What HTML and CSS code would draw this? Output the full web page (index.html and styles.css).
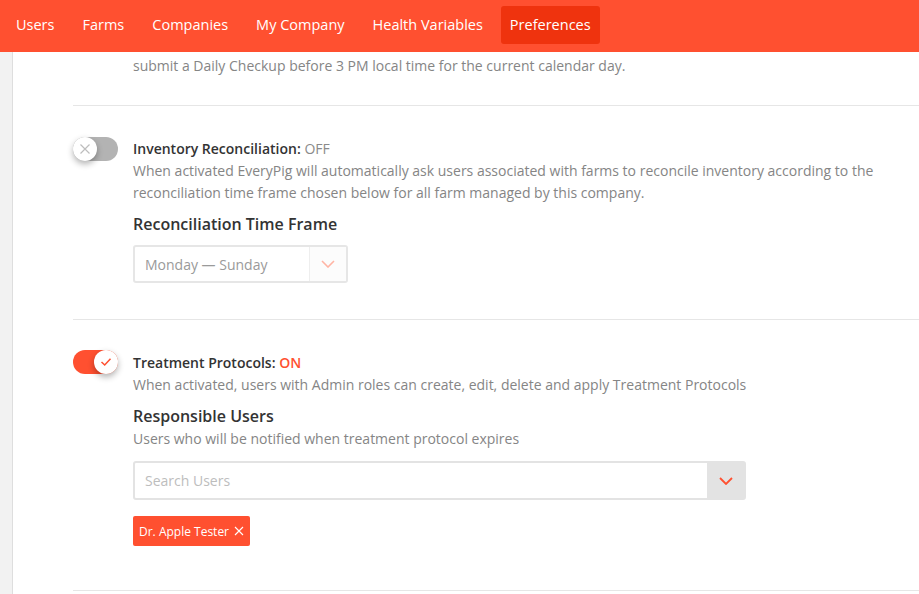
FILE: index.html
```html
<!DOCTYPE html>
<html>
<head>
<meta charset="utf-8">
<link rel="stylesheet" href="styles.css">
</head>
<body>
<header class="topbar">
  <nav class="nav">
    <a class="nav-item">Users</a>
    <a class="nav-item">Farms</a>
    <a class="nav-item">Companies</a>
    <a class="nav-item">My Company</a>
    <a class="nav-item">Health Variables</a>
    <a class="nav-item active">Preferences</a>
  </nav>
</header>
<div class="layout">
  <aside class="sidebar"></aside>
  <main class="main">
    <section class="intro">
      <p class="desc">submit a Daily Checkup before 3 PM local time for the current calendar day.</p>
    </section>

    <section class="setting">
      <div class="toggle off"><span class="knob"><svg width="12" height="12" viewBox="0 0 12 12"><path d="M1.5 1.5L10.5 10.5M10.5 1.5L1.5 10.5" stroke="#bdbdbd" stroke-width="1.2" fill="none"/></svg></span></div>
      <div class="body">
        <div class="title">Inventory Reconciliation: <span class="state-off">OFF</span></div>
        <p class="desc">When activated EveryPig will automatically ask users associated with farms to reconcile inventory according to the reconciliation time frame chosen below for all farm managed by this company.</p>
        <h3 class="subhead">Reconciliation Time Frame</h3>
        <div class="select">
          <span class="select-value">Monday — Sunday</span>
          <span class="select-arrow"><svg width="14" height="8" viewBox="0 0 14 8"><path d="M1 1L7 7L13 1" stroke="#ffb4a4" stroke-width="1.6" fill="none"/></svg></span>
        </div>
      </div>
    </section>

    <section class="setting last">
      <div class="toggle on"><span class="knob"><svg width="12" height="10" viewBox="0 0 12 10"><path d="M1.5 5L4.7 8L10.5 1.8" stroke="#ff5030" stroke-width="1.5" fill="none"/></svg></span></div>
      <div class="body">
        <div class="title">Treatment Protocols: <span class="state-on">ON</span></div>
        <p class="desc">When activated, users with Admin roles can create, edit, delete and apply Treatment Protocols</p>
        <h3 class="subhead">Responsible Users</h3>
        <p class="desc">Users who will be notified when treatment protocol expires</p>
        <div class="search">
          <span class="search-placeholder">Search Users</span>
          <span class="search-arrow"><svg width="14" height="8" viewBox="0 0 14 8"><path d="M1 1L7 7L13 1" stroke="#ff5030" stroke-width="1.8" fill="none"/></svg></span>
        </div>
        <div class="tags">
          <span class="tag">Dr. Apple Tester <svg width="10" height="10" viewBox="0 0 10 10"><path d="M1 1L9 9M9 1L1 9" stroke="#fff" stroke-width="1.1" fill="none"/></svg></span>
        </div>
      </div>
    </section>
  </main>
</div>
</body>
</html>
```

FILE: styles.css
```css
* { box-sizing: border-box; }
html, body { margin: 0; padding: 0; }
body {
  font-family: "Open Sans", "Noto Sans", sans-serif;
  background: #fff;
  color: #333;
  width: 919px;
  height: 594px;
  overflow: hidden;
}
.topbar {
  height: 52px;
  background: #ff5030;
  display: flex;
  align-items: flex-start;
  padding-top: 6px;
}
.nav {
  display: flex;
  gap: 8px;
  padding-left: 6px;
  align-items: center;
}
.nav-item {
  color: #fff;
  font-size: 14.5px;
  line-height: 38px;
  height: 38px;
  padding: 0 10px;
  border-radius: 3px;
}
.nav-item.active { background: #ef330e; padding: 0 9px; }
.layout {
  display: flex;
  height: 542px;
}
.sidebar {
  width: 13px;
  flex: none;
  background: #f2f2f2;
  border-right: 1px solid #dedede;
}
.main {
  flex: 1;
  padding-left: 60px;
}
.desc {
  margin: 0;
  font-size: 14px;
  line-height: 22px;
  color: #858585;
}
.intro {
  padding: 3px 0 28px 60px;
  border-bottom: 1px solid #e6e6e6;
}
.setting {
  display: flex;
  padding: 32px 0 36px 0;
  border-bottom: 1px solid #e6e6e6;
}
.setting.last { padding-bottom: 44px; }
.toggle {
  flex: none;
  width: 45px;
  height: 24px;
  border-radius: 12px;
  margin-top: -1px;
  margin-right: 15px;
  position: relative;
}
.toggle.off { background: #b3b3b3; }
.toggle.on { background: #ff5030; margin-top: -2px; }
.knob {
  position: absolute;
  top: 0;
  width: 24px;
  height: 24px;
  border-radius: 50%;
  background: #fff;
  box-shadow: 0 3px 6px rgba(0,0,0,0.3);
  display: flex;
  align-items: center;
  justify-content: center;
}
.toggle.off .knob { left: 0; }
.toggle.on .knob { right: 0; }
.body { flex: 1; }
.title {
  font-size: 14px;
  line-height: 22px;
  font-weight: 600;
  color: #333;
}
.state-off { color: #8a8a8a; font-weight: 400; }
.state-on { color: #ff5030; font-weight: 600; }
.subhead {
  margin: 8px 0 0 0;
  font-size: 16px;
  line-height: 24px;
  font-weight: 600;
  color: #333;
}
.select {
  margin-top: 9px;
  width: 215px;
  height: 38px;
  border: 2px solid #e6e6e6;
  border-radius: 3px;
  display: flex;
  align-items: center;
}
.select-value {
  flex: 1;
  padding-left: 10px;
  font-size: 14px;
  color: #9a9a9a;
}
.select-arrow {
  width: 37px;
  height: 100%;
  border-left: 1px solid #eeeeee;
  display: flex;
  align-items: center;
  justify-content: center;
  background: #fcfcfc;
}
.search {
  margin-top: 11px;
  width: 613px;
  height: 39px;
  border: 2px solid #e3e3e3;
  border-radius: 3px;
  display: flex;
  align-items: center;
}
.search-placeholder {
  flex: 1;
  padding-left: 10px;
  font-size: 14px;
  color: #bdbdbd;
}
.search-arrow {
  width: 37px;
  height: 100%;
  background: #e3e3e3;
  display: flex;
  align-items: center;
  justify-content: center;
}
.tags { margin-top: 16px; display: flex; }
.tag {
  display: inline-flex;
  align-items: center;
  gap: 5px;
  height: 30px;
  padding: 0 6px 0 6px;
  background: #ff5030;
  color: #fff;
  font-size: 12px;
  border-radius: 2px;
}
```
